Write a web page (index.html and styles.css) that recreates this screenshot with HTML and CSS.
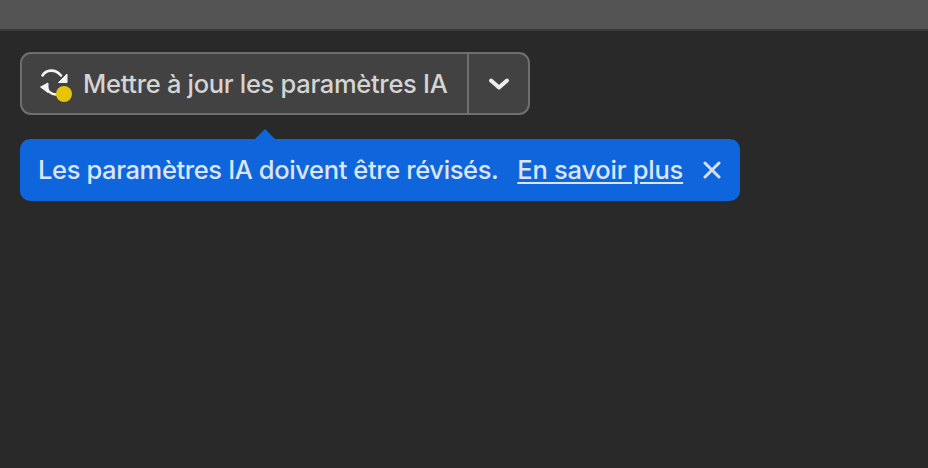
FILE: index.html
```html
<!DOCTYPE html>
<html lang="fr">
  <head>
    <meta charset="UTF-8" />
    <title>Mettre à jour les paramètres IA</title>
    <link rel="stylesheet" href="styles.css">
  </head>
  <body>
    <div class="topbar"></div>
    <div class="content">
      <div class="split-button">
        <button class="update-btn">
          <svg class="update-icon" width="36" height="36" viewBox="0 0 36 36">
            <path d="M4.5 9.5C8 3.5 17 2.5 23 9.5" fill="none" stroke="#f4f4f4" stroke-width="2.6" stroke-linecap="round"/>
            <path d="M29 8V16.5H20.5Z" fill="#f4f4f4" stroke="#f4f4f4" stroke-linejoin="round"/>
            <path d="M2.5 21L10 17V26.5Z" fill="#f4f4f4" stroke="#f4f4f4" stroke-linejoin="round"/>
            <path d="M9 22C10 26 13 28 18 28.5" fill="none" stroke="#f4f4f4" stroke-width="2.6" stroke-linecap="round"/>
            <circle cx="26" cy="28" r="8" fill="#e8c30c"/>
          </svg>
          <span>Mettre à jour les paramètres IA</span>
        </button>
        <button class="menu-btn">
          <svg width="22" height="14" viewBox="0 0 22 14">
            <path d="M3 3.5L11 10.5L19 3.5" fill="none" stroke="#eee" stroke-width="4" stroke-linecap="round" stroke-linejoin="round"/>
          </svg>
        </button>
      </div>
      <div class="tip">
        <span class="tip-text">Les paramètres IA doivent être révisés.</span>
        <a href="#" class="tip-link">En savoir plus</a>
        <svg class="tip-close" width="18" height="18" viewBox="0 0 18 18">
          <path d="M2 2L16 16M16 2L2 16" stroke="#d5dff0" stroke-width="3" stroke-linecap="round"/>
        </svg>
      </div>
    </div>
  </body>
</html>
```

FILE: styles.css
```css
body {
  margin: 0;
  height: 468px;
  overflow: hidden;
  background-color: #292929;
  font-family: Inter, "Open Sans", sans-serif;
}
.topbar {
  height: 29px;
  background-color: #545454;
  border-bottom: 2px solid #3a3a3a;
}
.content {
  display: flex;
  flex-direction: column;
  align-items: flex-start;
  padding: 21px 20px 0;
}
.split-button {
  display: flex;
  width: 510px;
  height: 63px;
  box-sizing: border-box;
  border: 2px solid #6f6f6f;
  border-radius: 11px;
  background-color: #424242;
}
.split-button button {
  display: flex;
  align-items: center;
  padding: 0;
  border: none;
  background: none;
  font-family: inherit;
}
.split-button .update-btn {
  width: 447px;
  padding-left: 16px;
  gap: 9px;
  border-right: 2px solid #6f6f6f;
  color: #d4d4d4;
  font-size: 25.5px;
  font-weight: 450;
  letter-spacing: -0.31px;
}
.menu-btn {
  flex: 1;
  justify-content: center;
}
.tip {
  position: relative;
  display: flex;
  align-items: center;
  width: 720px;
  height: 62px;
  margin-top: 24px;
  padding: 0 0 2px 18px;
  box-sizing: border-box;
  border-radius: 10px;
  background-color: #0f66dc;
  color: #dbe5f7;
  font-size: 25.5px;
  font-weight: 450;
}
.tip::before {
  content: "";
  position: absolute;
  left: 235px;
  top: -10px;
  border-left: 10px solid transparent;
  border-right: 10px solid transparent;
  border-bottom: 10px solid #0f66dc;
}
.tip-text {
  letter-spacing: -0.38px;
}
.tip-link {
  margin-left: 19px;
  color: #dbe5f7;
  letter-spacing: -0.25px;
  text-underline-offset: 3px;
}
.tip-close {
  margin: 2px 0 0 20px;
}
```
